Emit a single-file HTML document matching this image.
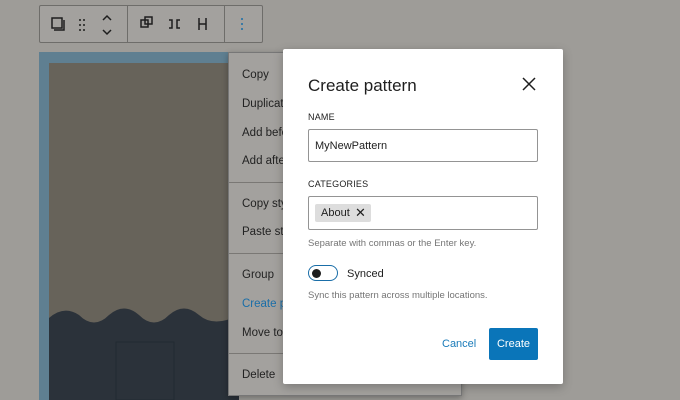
<html><head><style>
body{margin:0;width:680px;height:400px;background:#9e9c98;position:relative;overflow:hidden;font-family:"Liberation Sans",sans-serif}
.a{position:absolute}
.tb{left:39px;top:5px;width:222px;height:36px;border:1px solid #6e6d6a;border-radius:2px;background:#a3a19e}
.sep{top:0;width:1px;height:36px;background:#6e6d6a}
.menu{left:228px;top:52px;width:232px;height:342px;background:#a3a19e;border:1px solid #777;box-shadow:0 2px 6px rgba(0,0,0,.3)}
.mi{position:absolute;left:13px;font-size:11.5px;color:#222}
.hr{position:absolute;left:0;width:232px;height:1px;background:#7a7875}
.dlg{left:283px;top:49px;width:280px;height:335px;background:#fff;border-radius:2px;box-shadow:0 3px 10px rgba(0,0,0,.25)}
.lbl{position:absolute;left:25px;font-size:9px;color:#1e1e1e;letter-spacing:.2px}
.inp{position:absolute;left:25px;width:228px;border:1px solid #949494;border-radius:2px}
</style></head><body>
<div class="a tb">
<div class="a sep" style="left:87px"></div><div class="a sep" style="left:184px"></div>
<svg class="a" style="left:0;top:0" width="222" height="36" fill="none" stroke="#1e1e1e" stroke-width="1.5">
<rect x="12" y="12" width="10" height="10"/><path d="M24 14v10h-10"/>
<g fill="#1e1e1e" stroke="none"><circle cx="40" cy="14" r="1"/><circle cx="44" cy="14" r="1"/><circle cx="40" cy="19" r="1"/><circle cx="44" cy="19" r="1"/><circle cx="40" cy="24" r="1"/><circle cx="44" cy="24" r="1"/></g>
<path d="M63 14l4-4 4 4M63 24l4 4 4-4"/>
<rect x="101" y="14" width="7" height="7"/><rect x="105" y="11" width="7" height="7"/>
<path d="M129 14h3v8h-3M140 14h-3v8h3"/>
<path d="M159 12v12M166 12v12M159 18h7"/>
<g fill="#1a6ea8" stroke="none"><circle cx="202" cy="13" r="1"/><circle cx="202" cy="18" r="1"/><circle cx="202" cy="23" r="1"/></g>
</svg></div>
<div class="a" style="left:39px;top:52px;width:200px;height:348px;background:#5f7f91"></div>
<div class="a" style="left:49px;top:63px;width:190px;height:337px;background:#67635a"></div>
<svg class="a" style="left:49px;top:300px" width="190" height="100"><path d="M0 18 Q15 5 30 15 Q45 30 60 15 Q75 2 90 15 Q105 30 120 15 Q135 2 150 15 Q165 28 190 15 V100 H0Z" fill="#2b323a"/><rect x="67" y="42" width="58" height="58" fill="none" stroke="#222a31"/></svg>
<div class="a menu">
<div class="mi" style="top:16px">Copy</div><div class="mi" style="top:45px">Duplicate</div><div class="mi" style="top:74px">Add before</div><div class="mi" style="top:102px">Add after</div>
<div class="hr" style="top:129px"></div>
<div class="mi" style="top:145px">Copy styles</div><div class="mi" style="top:173px">Paste styles</div>
<div class="hr" style="top:200px"></div>
<div class="mi" style="top:216px">Group</div><div class="mi" style="top:245px;color:#1a6ea8">Create pattern</div><div class="mi" style="top:274px">Move to</div>
<div class="hr" style="top:300px"></div>
<div class="mi" style="top:316px">Delete</div>
</div>
<div class="a dlg">
<div class="a" style="left:25px;top:27px;font-size:17px;color:#1e1e1e">Create pattern</div>
<svg class="a" style="left:239px;top:28px" width="14" height="14" stroke="#1e1e1e" stroke-width="1.5"><path d="M1 1L13 13M13 1L1 13"/></svg>
<div class="lbl" style="top:63px">NAME</div>
<div class="inp" style="top:80px;height:31px"><span class="a" style="left:6px;top:10px;font-size:11px;color:#1e1e1e">MyNewPattern</span></div>
<div class="lbl" style="top:130px">CATEGORIES</div>
<div class="inp" style="top:147px;height:32px"><div class="a" style="left:6px;top:7px;width:56px;height:18px;background:#ddd;border-radius:2px;font-size:11px;color:#1e1e1e"><span class="a" style="left:6px;top:3px">About</span><span class="a" style="left:40px;top:1px;font-size:13px">✕</span></div></div>
<div class="a" style="left:25px;top:189px;font-size:9.5px;color:#757575">Separate with commas or the Enter key.</div>
<div class="a" style="left:25px;top:216px;width:30px;height:16px;border:1.5px solid #1a6ea8;border-radius:10px;box-sizing:border-box"><div class="a" style="left:2px;top:2px;width:28px;height:13px"></div><div class="a" style="left:3px;top:2.5px;width:9px;height:9px;border-radius:50%;background:#1e1e1e"></div></div>
<div class="a" style="left:64px;top:219px;font-size:11px;color:#1e1e1e">Synced</div>
<div class="a" style="left:25px;top:241px;font-size:9.5px;color:#757575">Sync this pattern across multiple locations.</div>
<div class="a" style="left:159px;top:289px;font-size:11px;color:#1a7bb9">Cancel</div>
<div class="a" style="left:206px;top:279px;width:49px;height:32px;background:#0a75b9;border-radius:2px;color:#fff;font-size:11px;text-align:center;line-height:32px">Create</div>
</div>
</body></html>
